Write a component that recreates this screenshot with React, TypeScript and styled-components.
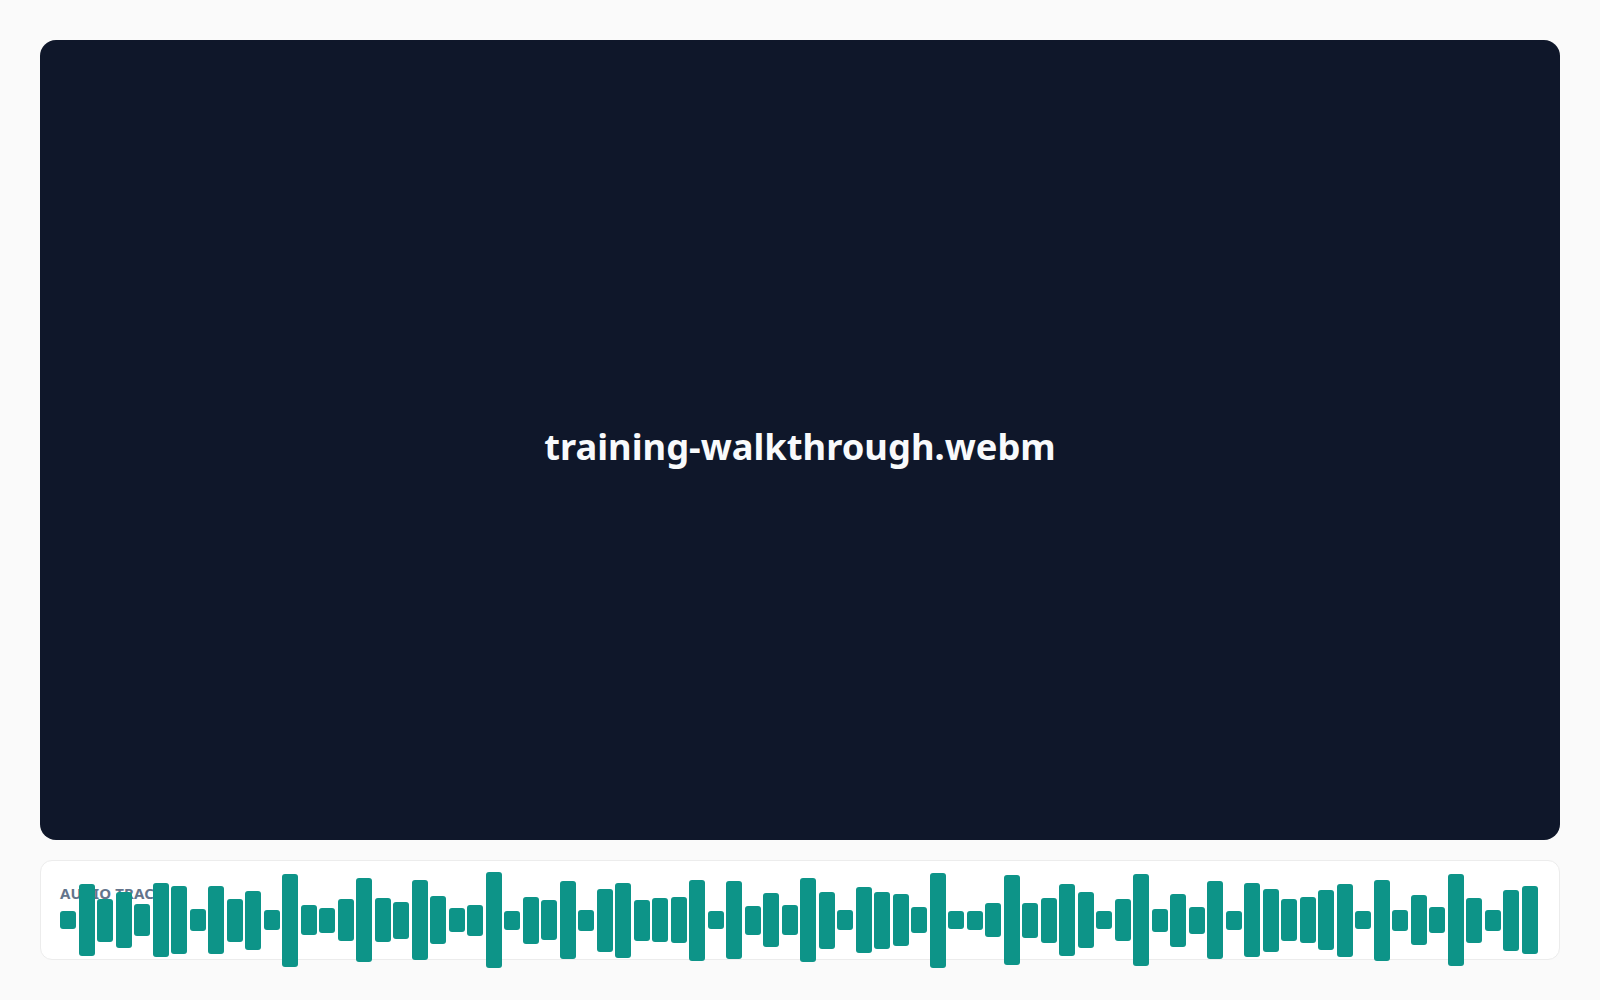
import React from "react";
import styled, { createGlobalStyle } from "styled-components";

const GlobalStyle = createGlobalStyle`
  html, body {
    margin: 0;
    padding: 0;
    background: #fafafa;
  }
  * { box-sizing: border-box; }
  body {
    font-family: "Noto Sans", "Open Sans", sans-serif;
  }
`;

const Page = styled.div`
  width: 1600px;
  height: 1000px;
  padding: 40px;
  display: flex;
  flex-direction: column;
  gap: 20px;
  background: #fafafa;
`;

const VideoStage = styled.div`
  flex: 1;
  background: #0f172a;
  border-radius: 16px;
  display: flex;
  align-items: center;
  justify-content: center;
`;

const FileName = styled.div`
  color: #f8fafc;
  font-family: "Noto Sans", sans-serif;
  font-weight: 700;
  font-size: 36.3px;
  line-height: 1.2;
  padding-top: 14px;
`;

const AudioPanel = styled.div`
  height: 100px;
  flex: 0 0 100px;
  background: #ffffff;
  border: 1px solid #ececec;
  border-radius: 12px;
  padding: 23px 19px 22px;
  display: flex;
  flex-direction: column;
`;

const TrackLabel = styled.div`
  font-family: "Noto Sans", sans-serif;
  font-size: 15px;
  font-weight: 700;
  line-height: 19px;
  letter-spacing: 0.01em;
  text-transform: uppercase;
  color: #64748b;
`;

const Waveform = styled.div`
  flex: 1 1 0;
  min-height: 0;
  height: 34px;
  display: flex;
  align-items: center;
  gap: 2.5px;
`;

const Bar = styled.div`
  flex: 0 0 16px;
  background: #0d9488;
  border-radius: 3px;
`;

const heights = [
  18, 72, 43, 56, 32, 74, 68, 22, 68, 43, 59, 20, 93, 30, 25, 42, 84, 44, 37, 80,
  48, 24, 31, 96, 19, 47, 40, 78, 21, 63, 75, 41, 44, 46, 81, 18, 78, 29, 54, 30,
  84, 57, 20, 66, 57, 52, 26, 95, 18, 19, 34, 90, 35, 45, 72, 56, 18, 42, 92, 23,
  53, 27, 78, 19, 74, 63, 42, 46, 60, 73, 18, 81, 21, 50, 26, 92, 45, 21, 61, 68,
];

export default function App() {
  return (
    <>
      <GlobalStyle />
      <Page>
        <VideoStage>
          <FileName>training-walkthrough.webm</FileName>
        </VideoStage>
        <AudioPanel>
          <TrackLabel>Audio Track</TrackLabel>
          <Waveform>
            {heights.map((h, i) => (
              <Bar key={i} style={{ height: `${h}px` }} />
            ))}
          </Waveform>
        </AudioPanel>
      </Page>
    </>
  );
}
